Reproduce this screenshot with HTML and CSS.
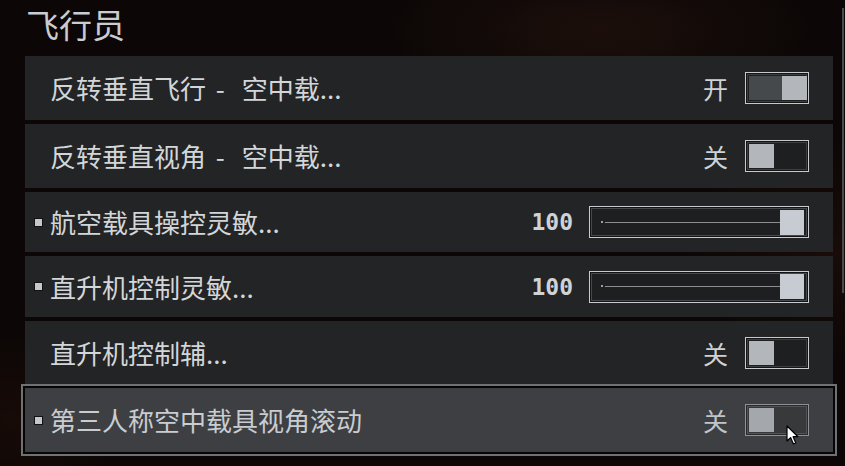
FILE: index.html
```html
<!DOCTYPE html>
<html lang="zh-CN">
<head>
<meta charset="utf-8">
<link rel="stylesheet" href="styles.css">
</head>
<body>
<div class="page">
  <div class="main">
    <div class="title">飞行员</div>
    <div class="list">
      <div class="row h64">
        <span class="mark"></span>
        <span class="label">反转垂直飞行 <span class="dash">-</span> 空中载...</span>
        <span class="state">开</span>
        <span class="toggle on"><span class="fill"></span><span class="knob"></span></span>
      </div>
      <div class="row h64">
        <span class="mark"></span>
        <span class="label">反转垂直视角 <span class="dash">-</span> 空中载...</span>
        <span class="state">关</span>
        <span class="toggle"><span class="knob"></span></span>
      </div>
      <div class="row h60">
        <span class="mark shown"></span>
        <span class="label">航空载具操控灵敏...</span>
        <span class="value">100</span>
        <span class="slider"><span class="track"></span><span class="sknob"></span></span>
      </div>
      <div class="row h61">
        <span class="mark shown"></span>
        <span class="label">直升机控制灵敏...</span>
        <span class="value">100</span>
        <span class="slider"><span class="track"></span><span class="sknob"></span></span>
      </div>
      <div class="row h63">
        <span class="mark"></span>
        <span class="label">直升机控制辅...</span>
        <span class="state">关</span>
        <span class="toggle"><span class="knob"></span></span>
      </div>
      <div class="row h64 selected">
        <span class="mark shown"></span>
        <span class="label">第三人称空中载具视角滚动</span>
        <span class="state">关</span>
        <span class="toggle"><span class="knob"></span></span>
        <svg class="cursor" width="14" height="21" viewBox="0 0 14 21"><path d="M1 1 L1 16 L4.6 12.6 L7.4 19 L9.8 18 L7.1 11.7 L12 11.7 Z" fill="#ffffff" stroke="#000000" stroke-width="1.2" stroke-linejoin="round"/></svg>
      </div>
    </div>
  </div>
  <div class="scrollbar"></div>
</div>
</body>
</html>
```
FILE: styles.css
```css
html, body {
  margin: 0;
  padding: 0;
}
body {
  width: 845px;
  height: 466px;
  overflow: hidden;
  background:
    radial-gradient(ellipse 300px 110px at 600px 30px, rgba(58, 30, 20, 0.35), rgba(0,0,0,0) 70%),
    radial-gradient(ellipse 200px 160px at 830px 250px, rgba(55, 22, 14, 0.3), rgba(0,0,0,0) 70%),
    radial-gradient(ellipse 160px 120px at 10px 420px, rgba(50, 18, 10, 0.3), rgba(0,0,0,0) 70%),
    #0c0706;
  font-family: "Noto Sans CJK SC", "Noto Sans", sans-serif;
  color: #d2d5d8;
}
.page {
  display: flex;
  align-items: flex-start;
}
.main {
  width: 808px;
  padding-left: 25px;
}
.title {
  padding-left: 1px;
  line-height: 48px;
  font-size: 33px;
  color: #c9ccd0;
  margin-bottom: 8px;
}
.list {
  display: flex;
  flex-direction: column;
  gap: 4px;
}
.row {
  position: relative;
  display: flex;
  align-items: center;
  background: #232425;
  padding: 0 24px 0 10px;
}
.h64 { height: 64px; }
.h60 { height: 60px; }
.h61 { height: 61px; }
.h63 { height: 63px; }
.row.selected {
  background: #3d3f42;
  box-shadow: 0 0 0 2px #060505, 0 0 0 4px #6f7173;
}
.mark {
  width: 7px;
  height: 7px;
  margin-right: 8px;
  flex: none;
}
.mark.shown {
  background: #c3c8cd;
  box-shadow: 0 0 0 1px #111213;
}
.label {
  flex: 1;
  font-size: 26px;
  line-height: 40px;
  color: #d3d6d9;
  white-space: nowrap;
}
.dash {
  margin-left: 4px;
  margin-right: 11px;
}
.selected .label { color: #c9ccd0; }
.state {
  font-size: 25px;
  line-height: 40px;
  color: #cfd2d5;
  margin-right: 17px;
}
.selected .state { color: #c2c5c8; }
.toggle {
  width: 64px;
  height: 32px;
  box-sizing: border-box;
  border: 1px solid #c6cacd;
  box-shadow: inset 0 0 0 1px #141516, inset 0 0 0 2px #3c3e40;
  background: #1e1f20;
  padding: 3px;
  display: flex;
  align-items: center;
}
.selected .toggle {
  border-color: #8e9194;
  background: #38393b;
  box-shadow: inset 0 0 0 1px #2a2b2d, inset 0 0 0 2px #505255;
}
.toggle .knob {
  width: 25px;
  height: 24px;
  background: #b3b7bc;
  flex: none;
}
.selected .toggle .knob { background: #a4a8ad; }
.toggle.on .fill {
  width: 33px;
  height: 24px;
  background: #46494c;
  flex: none;
}
.value {
  font-family: "DejaVu Sans Mono", monospace;
  font-weight: bold;
  font-size: 23px;
  color: #cfd3d7;
  margin-right: 16px;
}
.slider {
  width: 220px;
  height: 32px;
  box-sizing: border-box;
  border: 1px solid #c8ccd0;
  box-shadow: inset 0 0 0 1px #121314, inset 0 0 0 2px #48494b;
  background: #1e1f20;
  display: flex;
  align-items: center;
  padding: 0 4px 0 11px;
}
.track {
  flex: 1;
  height: 1px;
  margin-left: 4px;
  background: #8c8f92;
  position: relative;
}
.track::before {
  content: "";
  position: absolute;
  left: -4px;
  top: -1px;
  width: 2px;
  height: 2px;
  background: #9a9da0;
}
.sknob {
  width: 24px;
  height: 25px;
  background: #c6ccd2;
  flex: none;
}
.cursor {
  position: absolute;
  left: 761px;
  top: 37px;
}
.scrollbar {
  width: 2px;
  height: 285px;
  margin-top: 8px;
  margin-left: 9px;
  background: #4a4b4c;
}
```
